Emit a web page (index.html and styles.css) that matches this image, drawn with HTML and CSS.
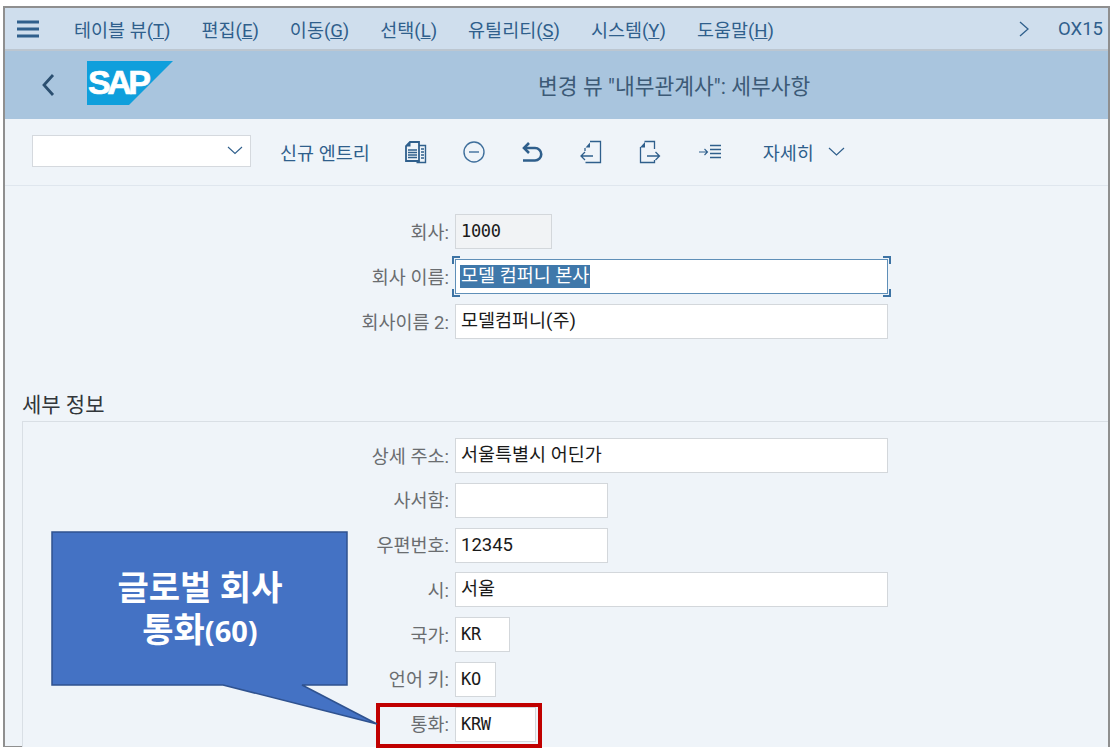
FILE: index.html
```html
<!DOCTYPE html>
<html lang="ko">
<head>
    <meta charset="UTF-8">
    <meta name="viewport" content="width=device-width, initial-scale=1.0">
    <title>변경 뷰 "내부관계사": 세부사항</title>
    <link rel="stylesheet" href="styles.css">
</head>
<body>
    <div class="window">
        <div class="menubar">
            <svg class="hamburger" width="24" height="18" viewBox="0 0 24 18"><path d="M1 2h22M1 9h22M1 16h22" stroke="#2f5f8c" stroke-width="3" fill="none"/></svg>
            <span class="menu-item first">테이블 뷰(<u>T</u>)</span>
            <span class="menu-item">편집(<u>E</u>)</span>
            <span class="menu-item">이동(<u>G</u>)</span>
            <span class="menu-item">선택(<u>L</u>)</span>
            <span class="menu-item">유틸리티(<u>S</u>)</span>
            <span class="menu-item">시스템(<u>Y</u>)</span>
            <span class="menu-item">도움말(<u>H</u>)</span>
            <svg class="menu-more" width="12" height="18" viewBox="0 0 12 18"><path d="M2 2l8 7-8 7" stroke="#2f5f8c" stroke-width="1.3" fill="none"/></svg>
            <span class="tcode">OX15</span>
        </div>

        <div class="titlebar">
            <svg class="back" width="14" height="24" viewBox="0 0 14 24"><path d="M12 2L3 12l9 10" stroke="#2b4f70" stroke-width="2.8" fill="none"/></svg>
            <svg class="logo" width="86" height="44" viewBox="0 0 86 44">
                <path d="M0 0h86L42 44H0z" fill="#0f9fdc"/>
                <text x="1" y="33" class="logo-text">SAP</text>
            </svg>
            <div class="title">변경 뷰 "내부관계사": 세부사항</div>
        </div>

        <div class="toolbar">
            <div class="combo">
                <svg width="16" height="9" viewBox="0 0 16 9"><path d="M1 1l7 6.5L15 1" stroke="#2f5f8c" stroke-width="1.1" fill="none"/></svg>
            </div>
            <span class="tool-text new-entry">신규 엔트리</span>
            <svg class="tool copy" width="24" height="24" viewBox="0 0 24 24" fill="none" stroke="#2f5f8c">
                <path d="M14.500 5.500h7v17h-9" stroke-width="1.4"/>
                <path d="M6 2h9v19H2V6z" fill="#eff4f9" stroke-width="1.8"/>
                <path d="M2 6.500h4.500V2z" fill="#2f5f8c" stroke="none"/>
                <path d="M4 10h9M4 12.500h9M4 15h9M4 17.500h9M17 9h3M17 12h3M17 15h3M17 18h3" stroke-width="1.300"/>
            </svg>
            <svg class="tool minus" width="24" height="24" viewBox="0 0 24 24" fill="none" stroke="#3f6f9c" stroke-width="1.4">
                <circle cx="12" cy="12" r="10"/>
                <path d="M7 12h10"/>
            </svg>
            <svg class="tool undo" width="24" height="24" viewBox="0 0 24 24" fill="none" stroke="#2f5f8c" stroke-width="2.600">
                <path d="M9 3L4 8l5 5"/>
                <path d="M4.500 8H15a6 6 0 0 1 0 12.500H3"/>
            </svg>
            <svg class="tool prev" width="24" height="24" viewBox="0 0 24 24" fill="none" stroke="#2f5f8c" stroke-width="1.3">
                <path d="M11 1.500h10.500v21H6.500M6 11V8"/>
                <path d="M6.500 7.500h4.500V2.500z" fill="#2f5f8c" stroke="none"/>
                <path d="M14 16H2M6 12l-4 4 4 4"/>
            </svg>
            <svg class="tool next" width="24" height="24" viewBox="0 0 24 24" fill="none" stroke="#2f5f8c" stroke-width="1.3">
                <path d="M6.500 1.500H16.500V9M2.500 7v15.500H16.500V20"/>
                <path d="M2 7.500h5V2z" fill="#2f5f8c" stroke="none"/>
                <path d="M9 16h12M17.500 12l4 4-4 4"/>
            </svg>
            <svg class="tool move" width="24" height="18" viewBox="0 0 24 18" fill="none" stroke="#2f5f8c">
                <path d="M1 9h8M6.500 6L9.500 9l-3 3" stroke-width="1.1"/>
                <path d="M12 2.500h11M12 6.500h11M12 10.500h11M12 14.500h11" stroke-width="1.600"/>
            </svg>
            <span class="tool-text more">자세히</span>
            <svg width="17" height="10" viewBox="0 0 17 10"><path d="M1 1l7.500 7L16 1" stroke="#2f5f8c" stroke-width="1.2" fill="none"/></svg>
        </div>

        <div class="content">
            <div class="form top-form">
                <div class="row">
                    <label>회사:</label>
                    <span class="field readonly mono w97">1000</span>
                </div>
                <div class="row">
                    <label>회사 이름:</label>
                    <span class="field focused w433">
                        <span class="selected">모델 컴퍼니 본사</span>
                        <i class="corner tl"></i><i class="corner tr"></i><i class="corner bl"></i><i class="corner br"></i>
                    </span>
                </div>
                <div class="row">
                    <label>회사이름 2:</label>
                    <span class="field w433">모델컴퍼니(주)</span>
                </div>
            </div>

            <h2 class="group-title">세부 정보</h2>
            <div class="group">
                <div class="form">
                    <div class="row">
                        <label>상세 주소:</label>
                        <span class="field w433">서울특별시 어딘가</span>
                    </div>
                    <div class="row">
                        <label>사서함:</label>
                        <span class="field w153"></span>
                    </div>
                    <div class="row">
                        <label>우편번호:</label>
                        <span class="field w153">12345</span>
                    </div>
                    <div class="row">
                        <label>시:</label>
                        <span class="field w433">서울</span>
                    </div>
                    <div class="row">
                        <label>국가:</label>
                        <span class="field mono w55">KR</span>
                    </div>
                    <div class="row">
                        <label>언어 키:</label>
                        <span class="field mono w41">KO</span>
                    </div>
                    <div class="row">
                        <label>통화:</label>
                        <span class="field mono w81">KRW</span>
                    </div>
                </div>
            </div>
        </div>

        <div class="highlight"></div>
        <svg class="callout" width="340" height="202" viewBox="0 0 340 202">
            <path d="M1 1H296V154H251L326 193 172 154H1z" fill="#4472c4" stroke="#2f528f" stroke-width="1.500"/>
        </svg>
        <div class="callout-text">글로벌 회사<br>통화<span class="num">(60)</span></div>
    </div>
</body>
</html>
```
FILE: styles.css
```css
* {
    box-sizing: border-box;
}
html, body {
    margin: 0;
    height: 100%;
    background: #fff;
    overflow: hidden;
}
body {
    padding: 6px 5px 5px 3px;
    font-family: Roboto, "Noto Sans CJK KR", sans-serif;
    font-size: 18.5px;
}
.window {
    position: relative;
    height: 741px;
    border: 2px solid #8f8f8f;
    border-bottom-width: 1px;
    background: #eff4f9;
}
.menubar {
    display: flex;
    align-items: center;
    height: 43px;
    padding-left: 11px;
    background: #cfdeed;
    border-bottom: 2px solid #bcc6d0;
    color: #2f5f8c;
}
.menu-item {
    margin-left: 31px;
    white-space: nowrap;
}
.menu-item.first {
    margin-left: 34px;
}
.menu-more {
    margin-left: auto;
}
.tcode {
    margin-left: 28px;
    margin-right: 5px;
}
.titlebar {
    position: relative;
    display: flex;
    align-items: center;
    height: 68px;
    padding-left: 36px;
    background: #a9c5de;
}
.logo {
    margin-left: 32px;
    margin-bottom: 4px;
}
.logo-text {
    font-family: "Liberation Sans", sans-serif;
    font-weight: 700;
    font-size: 34px;
    letter-spacing: -3.5px;
    fill: #fff;
    stroke: #fff;
    stroke-width: 0.7px;
}
.title {
    position: absolute;
    left: 533px;
    top: 18px;
    color: #3c5a76;
    font-size: 21.5px;
    white-space: nowrap;
}
.toolbar {
    display: flex;
    align-items: center;
    height: 67px;
    padding-left: 27px;
    padding-bottom: 1px;
    border-bottom: 1px solid #dfe6ee;
    color: #2f5f8c;
}
.combo {
    display: flex;
    align-items: center;
    justify-content: flex-end;
    width: 219px;
    height: 32px;
    margin-bottom: 2px;
    padding-right: 7px;
    background: #fff;
    border: 1px solid #d5d9de;
}
.tool-text {
    white-space: nowrap;
}
.new-entry {
    margin-left: 29px;
}
.tool {
    flex: none;
}
.copy {
    margin-left: 34px;
}
.minus {
    margin-left: 34px;
}
.undo {
    margin-left: 34px;
}
.prev {
    margin-left: 35px;
}
.next {
    margin-left: 35px;
}
.move {
    margin-left: 36px;
}
.more {
    margin: 0 14px 0 41px;
}
.content {
    height: 561px;
    padding-top: 28px;
    overflow: hidden;
}
.form {
    display: flex;
    flex-direction: column;
}
.row {
    display: flex;
    align-items: center;
    height: 35px;
    margin-bottom: 10px;
}
.row label {
    width: 450px;
    padding-right: 6px;
    padding-bottom: 2px;
    text-align: right;
    color: #6a6d70;
    white-space: nowrap;
}
.field {
    position: relative;
    display: block;
    height: 35px;
    padding-left: 5px;
    line-height: 33px;
    background: #fff;
    border: 1px solid #d3d7db;
    color: #1a1a1a;
    white-space: nowrap;
}
.readonly {
    background: #f1f3f5;
}
.mono {
    font-family: "DejaVu Sans Mono", monospace;
    font-size: 17px;
    letter-spacing: -0.3px;
}
.w41 { width: 41px; }
.w55 { width: 55px; }
.w81 { width: 81px; }
.w97 { width: 97px; }
.w153 { width: 153px; }
.w433 { width: 433px; }
.focused {
    border-color: #5f8fb8;
}
.selected {
    display: inline-block;
    padding: 0 1px;
    line-height: 23px;
    margin-left: -1px;
    background: #3f78aa;
    color: #fff;
}
.corner {
    position: absolute;
    width: 8px;
    height: 8px;
    border: 0 solid #3d73a4;
}
.tl { left: -4px; top: -4px; border-width: 2px 0 0 2px; }
.tr { right: -4px; top: -4px; border-width: 2px 2px 0 0; }
.bl { left: -4px; bottom: -4px; border-width: 0 0 2px 2px; }
.br { right: -4px; bottom: -4px; border-width: 0 2px 2px 0; }
.group-title {
    margin: 43px 0 3px 17px;
    font-weight: 400;
    font-size: 21px;
    line-height: 26px;
    color: #32363a;
}
.group {
    margin-left: 17px;
    padding-top: 16px;
    height: 340px;
    background: #eff4f9;
    border: 1px solid #d9dfe5;
    border-right: 0;
}
.group .row {
    margin-bottom: 9.8px;
}
.group .row label {
    width: 432px;
}
.highlight {
    position: absolute;
    left: 371px;
    top: 695px;
    width: 166px;
    height: 45px;
    border: 4px solid #c00000;
}
.callout {
    position: absolute;
    left: 46px;
    top: 523px;
}
.callout-text {
    position: absolute;
    left: 47px;
    top: 559px;
    width: 296px;
    text-align: center;
    color: #fff;
    font-weight: 700;
    font-size: 34px;
    line-height: 42px;
    white-space: nowrap;
}
.num {
    font-family: "Open Sans", sans-serif;
    font-size: 29px;
}
```
